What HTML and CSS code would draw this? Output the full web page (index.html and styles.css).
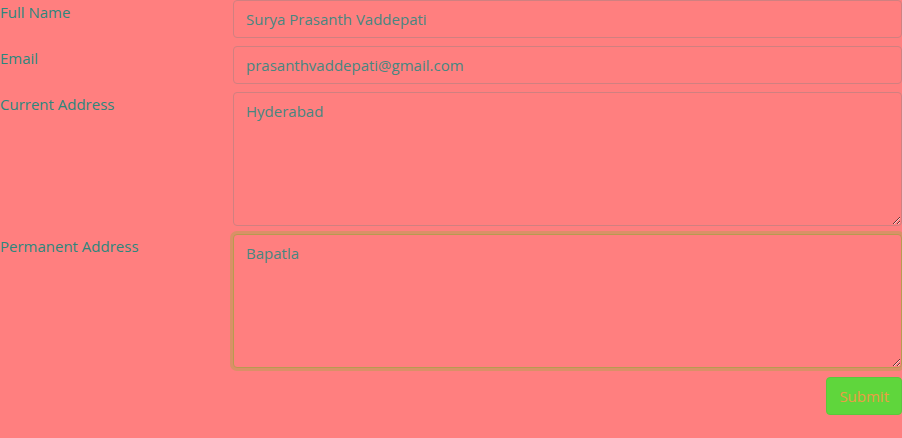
FILE: index.html
```html
<!DOCTYPE html>
<html>
<head>
<meta charset="utf-8">
<link rel="stylesheet" href="styles.css">
</head>
<body>
<form class="form">
  <div class="row">
    <div class="col-label"><label class="label">Full Name</label></div>
    <div class="col-field"><input class="control" type="text" value="Surya Prasanth Vaddepati"></div>
  </div>
  <div class="row">
    <div class="col-label"><label class="label">Email</label></div>
    <div class="col-field"><input class="control" type="text" value="prasanthvaddepati@gmail.com"></div>
  </div>
  <div class="row">
    <div class="col-label"><label class="label">Current Address</label></div>
    <div class="col-field"><textarea class="control area" rows="5">Hyderabad</textarea></div>
  </div>
  <div class="row">
    <div class="col-label"><label class="label">Permanent Address</label></div>
    <div class="col-field"><textarea class="control area focused" rows="5" autofocus>Bapatla</textarea></div>
  </div>
  <div class="actions">
    <button type="button" class="btn">Submit</button>
  </div>
</form>
</body>
</html>
```
FILE: styles.css
```css
html, body {
  margin: 0;
  padding: 0;
  background: #ff7f7f;
}
body {
  font-family: "Open Sans", "Noto Sans", sans-serif;
  font-size: 15px;
  line-height: 24px;
  color: #2c877d;
}
.form {
  display: flex;
  flex-direction: column;
}
.row {
  display: flex;
  margin-bottom: 8px;
}
.col-label {
  width: 233px;
  flex: none;
}
.label {
  display: block;
  color: #2c877d;
}
.col-field {
  flex: 1;
  display: flex;
}
.control {
  flex: 1;
  box-sizing: border-box;
  height: 38px;
  margin: 0;
  padding: 6px 12px;
  border: 1px solid #d08080;
  border-radius: 4px;
  background: #ff7f7f;
  color: #478781;
  font: inherit;
  line-height: 24px;
  outline: none;
}
.area {
  height: 134px;
  resize: vertical;
}
.focused {
  border-color: #b89a50;
  box-shadow: 0 0 0 3px rgba(205, 150, 95, 0.75);
  caret-color: #1f6f6a;
}
.actions {
  display: flex;
  justify-content: flex-end;
  padding-top: 1px;
}
.btn {
  box-sizing: border-box;
  height: 38px;
  padding: 6px 12px;
  border: 1px solid #5ac83d;
  border-radius: 4px;
  background: #5fd63c;
  color: #eb9c45;
  font: inherit;
  line-height: 24px;
}
```
